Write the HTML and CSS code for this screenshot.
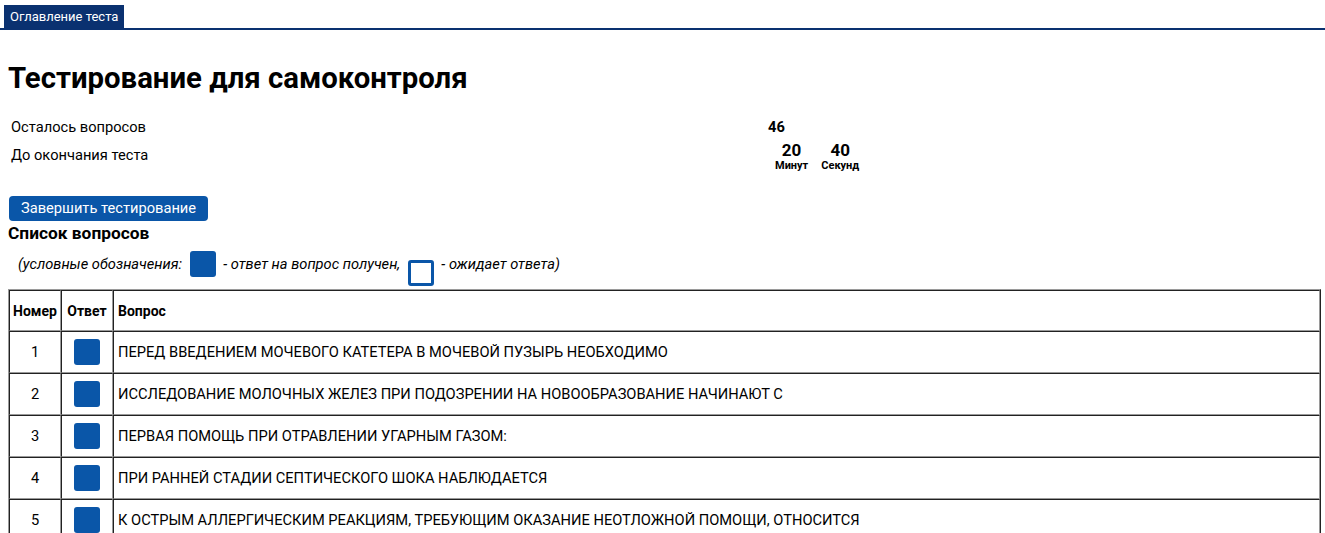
FILE: index.html
```html
<!DOCTYPE html>
<html lang="ru">
<head>
<meta charset="utf-8">
<title>Тестирование для самоконтроля</title>
<link rel="stylesheet" href="styles.css">
</head>
<body>
<div class="tabs">
  <span class="tab">Оглавление теста</span>
</div>
<main class="content">
  <h1 class="title">Тестирование для самоконтроля</h1>
  <div class="info">
    <div class="info-row">
      <span class="info-label">Осталось вопросов</span>
      <span class="info-count">46</span>
    </div>
    <div class="info-row">
      <span class="info-label">До окончания теста</span>
      <div class="timer">
        <div class="timer-unit"><span class="timer-num">20</span><span class="timer-cap">Минут</span></div>
        <div class="timer-unit"><span class="timer-num">40</span><span class="timer-cap">Секунд</span></div>
      </div>
    </div>
  </div>
  <button class="finish">Завершить тестирование</button>
  <h2 class="list-title">Список вопросов</h2>
  <p class="legend">(условные обозначения: <span class="mark filled"></span> - ответ на вопрос получен, <span class="mark empty"></span> - ожидает ответа)</p>
  <table class="qtable">
    <thead>
      <tr><th class="c-num">Номер</th><th class="c-ans">Ответ</th><th class="c-q">Вопрос</th></tr>
    </thead>
    <tbody>
      <tr><td class="c-num">1</td><td class="c-ans"><span class="mark filled"></span></td><td class="c-q">ПЕРЕД ВВЕДЕНИЕМ МОЧЕВОГО КАТЕТЕРА В МОЧЕВОЙ ПУЗЫРЬ НЕОБХОДИМО</td></tr>
      <tr><td class="c-num">2</td><td class="c-ans"><span class="mark filled"></span></td><td class="c-q">ИССЛЕДОВАНИЕ МОЛОЧНЫХ ЖЕЛЕЗ ПРИ ПОДОЗРЕНИИ НА НОВООБРАЗОВАНИЕ НАЧИНАЮТ С</td></tr>
      <tr><td class="c-num">3</td><td class="c-ans"><span class="mark filled"></span></td><td class="c-q">ПЕРВАЯ ПОМОЩЬ ПРИ ОТРАВЛЕНИИ УГАРНЫМ ГАЗОМ:</td></tr>
      <tr><td class="c-num">4</td><td class="c-ans"><span class="mark filled"></span></td><td class="c-q">ПРИ РАННЕЙ СТАДИИ СЕПТИЧЕСКОГО ШОКА НАБЛЮДАЕТСЯ</td></tr>
      <tr><td class="c-num">5</td><td class="c-ans"><span class="mark filled"></span></td><td class="c-q">К ОСТРЫМ АЛЛЕРГИЧЕСКИМ РЕАКЦИЯМ, ТРЕБУЮЩИМ ОКАЗАНИЕ НЕОТЛОЖНОЙ ПОМОЩИ, ОТНОСИТСЯ</td></tr>
    </tbody>
  </table>
</main>
</body>
</html>
```
FILE: styles.css
```css
* { box-sizing: border-box; }
html, body { margin: 0; padding: 0; background: #fff; }
body {
  font-family: Roboto, "Liberation Sans", Arial, sans-serif;
  color: #000;
  font-size: 14.667px;
}
.tabs {
  display: flex;
  padding: 5px 0 0 4px;
  border-bottom: 2px solid #0a3170;
}
.tab {
  display: block;
  background: #0a3170;
  color: #fff;
  font-size: 13px;
  line-height: 23px;
  height: 23px;
  padding: 0 6px;
}
.content {
  padding: 0 4px 0 8px;
}
.title {
  margin: 31px 0 0 0;
  font-size: 29.333px;
  font-weight: 700;
  line-height: 34px;
}
.info {
  margin-top: 23px;
  padding-left: 3px;
  display: flex;
  flex-direction: column;
}
.info-row {
  display: flex;
  align-items: flex-start;
}
.info-row + .info-row { margin-top: 10px; }
.info-label {
  width: 757px;
  line-height: 18px;
}
.info-count {
  font-weight: 700;
  line-height: 18px;
}
.timer {
  display: flex;
  gap: 13px;
  margin-left: 7px;
  margin-top: -6px;
}
.timer-unit {
  display: flex;
  flex-direction: column;
  align-items: center;
}
.timer-num {
  font-size: 17px;
  font-weight: 700;
  line-height: 20px;
}
.timer-cap {
  font-size: 11px;
  font-weight: 700;
  line-height: 12px;
}
.finish {
  display: block;
  margin: 24px 0 0 1px;
  height: 25px;
  padding: 0 12px;
  background: #0a56a8;
  color: #fff;
  border: 0;
  border-radius: 4px;
  font-family: inherit;
  font-size: 14.667px;
  line-height: 25px;
}
.list-title {
  margin: 0;
  font-size: 17.333px;
  font-weight: 700;
  line-height: 24px;
}
.legend {
  margin: 6px 0 0 10px;
  font-style: italic;
  font-size: 14.667px;
  line-height: 26px;
  display: flex;
  align-items: flex-start;
  white-space: pre;
}
.mark {
  display: inline-block;
  width: 26px;
  height: 26px;
  border-radius: 3px;
  vertical-align: middle;
}
.mark.filled { background: #0a56a8; }
.mark.empty { border: 3px solid #0a56a8; background: #fff; margin-top: 9px; }
.legend .mark { margin-left: 4px; margin-right: 4px; }
.qtable {
  margin-top: 3px;
  width: 1313px;
  border-spacing: 0;
  border-top: 1px solid #9a9a9a;
  border-left: 1px solid #9a9a9a;
  border-right: 1px solid #222;
  border-bottom: 1px solid #222;
}
.qtable th, .qtable td {
  border-top: 1px solid #222;
  border-left: 1px solid #222;
  border-right: 1px solid #9a9a9a;
  border-bottom: 1px solid #9a9a9a;
  height: 42px;
  padding: 0 4px;
  font-size: 14.667px;
}
.qtable th { height: 41px; font-size: 14px; font-weight: 700; text-align: left; }
.qtable th.c-num { padding: 0 2px; }
.c-num { width: 52px; text-align: center; }
.c-ans { width: 52px; text-align: center; }
.qtable th.c-num, .qtable th.c-ans { text-align: center; }
.qtable td.c-ans .mark { display: block; margin: 0 auto; }
```
